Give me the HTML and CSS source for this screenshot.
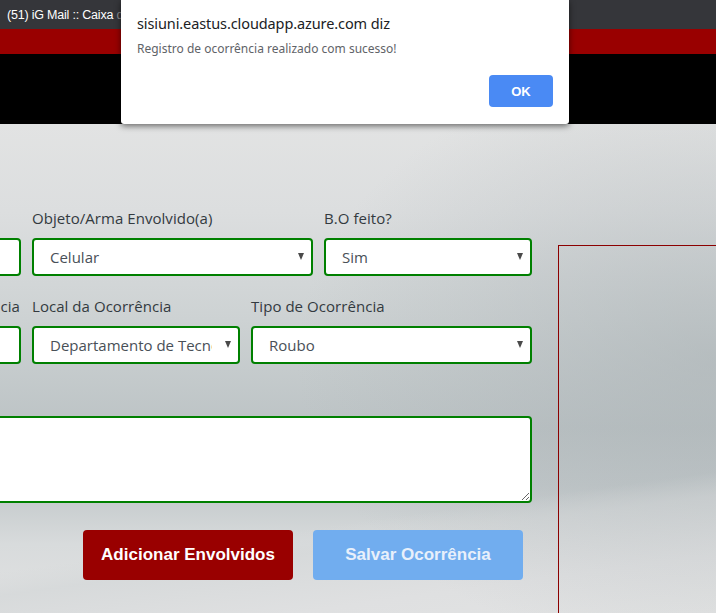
FILE: index.html
```html
<!DOCTYPE html>
<html lang="pt-BR">
<head>
<meta charset="utf-8">
<title>Registro de Ocorrência</title>
<link rel="stylesheet" href="styles.css">
</head>
<body>
<div class="tabbar"><span class="tab-title">(51) iG Mail :: Caixa <span class="fade">d</span></span></div>
<div class="redbar"></div>
<div class="blackbar"></div>

<div class="content">
  <div class="layout">
    <form class="form">
      <div class="row row-a">
        <div class="field">
          <label class="label"></label>
          <input class="input" type="text">
        </div>
        <div class="field">
          <label class="label">Objeto/Arma Envolvido(a)</label>
          <div class="select-wrap"><select class="select"><option>Celular</option></select></div>
        </div>
        <div class="field">
          <label class="label">B.O feito?</label>
          <div class="select-wrap"><select class="select"><option>Sim</option></select></div>
        </div>
      </div>
      <div class="row row-b">
        <div class="field">
          <label class="label label-right">ncia</label>
          <input class="input" type="text">
        </div>
        <div class="field">
          <label class="label">Local da Ocorrência</label>
          <div class="select-wrap"><select class="select"><option>Departamento de Tecnologia</option></select></div>
        </div>
        <div class="field">
          <label class="label">Tipo de Ocorrência</label>
          <div class="select-wrap"><select class="select"><option>Roubo</option></select></div>
        </div>
      </div>
      <div class="row-text">
        <textarea class="textarea"></textarea>
      </div>
      <div class="actions">
        <button type="button" class="btn btn-red">Adicionar Envolvidos</button>
        <button type="button" class="btn btn-blue">Salvar Ocorrência</button>
      </div>
    </form>
    <div class="panel"></div>
  </div>
</div>

<div class="dialog">
  <div class="dialog-title">sisiuni.eastus.cloudapp.azure.com diz</div>
  <div class="dialog-msg">Registro de ocorrência realizado com sucesso!</div>
  <div class="dialog-actions"><button type="button" class="dialog-ok">OK</button></div>
</div>
</body>
</html>
```
FILE: styles.css
```css
* { box-sizing: border-box; }
html, body { margin: 0; padding: 0; }
body {
  width: 716px;
  height: 613px;
  overflow: hidden;
  font-family: "Open Sans", "Noto Sans", sans-serif;
  position: relative;
  background: #e2e3e3;
}

.tabbar {
  height: 29px;
  background: #35363a;
  padding-left: 7px;
  display: flex;
  align-items: center;
  overflow: hidden;
  white-space: nowrap;
}
.tab-title {
  font-family: "Liberation Sans", Arial, sans-serif;
  font-size: 12.5px;
  color: #ffffff;
  letter-spacing: -0.2px;
}
.fade { color: #8a8b8d; }

.redbar { height: 25px; background: #990000; }
.blackbar { height: 70px; background: #000000; }

.content {
  height: 489px;
  overflow: hidden;
  padding-top: 84px;
  background:
    radial-gradient(ellipse 420px 300px at 100% 48%, rgba(168,176,179,0.55), rgba(168,176,179,0) 100%),
    linear-gradient(172deg, rgba(226,227,227,0) 0%, rgba(226,227,227,0) 76%, rgba(214,217,218,0.9) 80%, #dfe0e1 90%, #e2e3e3 100%),
    linear-gradient(to bottom, #e2e3e3 0%, #dcdedf 18%, #cdd2d3 40%, #bcc3c5 62%, #c2c8ca 74%, #d8dbdc 86%, #e1e2e2 100%);
}

.layout {
  display: flex;
  align-items: flex-start;
  margin-left: -189px;
}

.form { width: 721px; flex: none; }

.row { display: grid; column-gap: 11px; }
.row-a { grid-template-columns: 210px 281px 208px; }
.row-b { grid-template-columns: 210px 208px 281px; margin-top: 20px; }

.field { display: flex; flex-direction: column; min-width: 0; }

.label {
  font-size: 15px;
  line-height: 20px;
  height: 20px;
  color: #333a3f;
  margin-bottom: 10px;
  white-space: nowrap;
  letter-spacing: 0.05px;
}
.label-right { text-align: right; padding-right: 1px; }

.input, .select, .textarea {
  height: 38px;
  width: 100%;
  border: 2px solid #008000;
  border-radius: 4px;
  background: #ffffff;
  font-family: "Open Sans", "Noto Sans", sans-serif;
  font-size: 15px;
  color: #495057;
  outline: none;
}

.select-wrap { position: relative; }
.select {
  appearance: none;
  -webkit-appearance: none;
  padding: 0 26px 0 16px;
  text-overflow: clip;
}
.select-wrap::after {
  content: "";
  position: absolute;
  right: 9px;
  top: 15px;
  border-left: 3.5px solid transparent;
  border-right: 3.5px solid transparent;
  border-top: 7px solid #4a4a4a;
}

.row-text { margin-top: 52px; }
.textarea {
  display: block;
  height: 87px;
  resize: vertical;
  padding: 6px 12px;
}

.actions {
  margin-top: 27px;
  display: flex;
  justify-content: flex-end;
  gap: 20px;
  padding-right: 9px;
}
.btn {
  width: 210px;
  height: 50px;
  border: none;
  border-radius: 4px;
  font-family: "Liberation Sans", Arial, sans-serif;
  font-weight: bold;
  font-size: 17px;
  color: #ffffff;
}
.btn-red { background: #990000; }
.btn-blue { background: #71adef; color: #e8f0fb; }

.panel {
  flex: none;
  margin-left: 26px;
  margin-top: 37px;
  width: 200px;
  height: 420px;
  border: 1px solid #8b0000;
}

.dialog {
  position: absolute;
  left: 121px;
  top: 0;
  width: 448px;
  height: 124px;
  background: #ffffff;
  border-radius: 0 0 3px 3px;
  box-shadow: 0 2px 6px rgba(0,0,0,0.55);
  padding: 13px 16px 0 16px;
  font-family: "Noto Sans", "Open Sans", sans-serif;
}
.dialog-title {
  font-size: 14.5px;
  line-height: 20px;
  color: #202124;
  letter-spacing: -0.1px;
}
.dialog-msg {
  margin-top: 8px;
  font-size: 12px;
  line-height: 16px;
  color: #5f6368;
}
.dialog-actions {
  display: flex;
  justify-content: flex-end;
  margin-top: 18px;
}
.dialog-ok {
  width: 64px;
  height: 32px;
  border: none;
  border-radius: 4px;
  background: #4a8af4;
  color: #ffffff;
  font-family: "Liberation Sans", Arial, sans-serif;
  font-weight: bold;
  font-size: 13px;
}
```
